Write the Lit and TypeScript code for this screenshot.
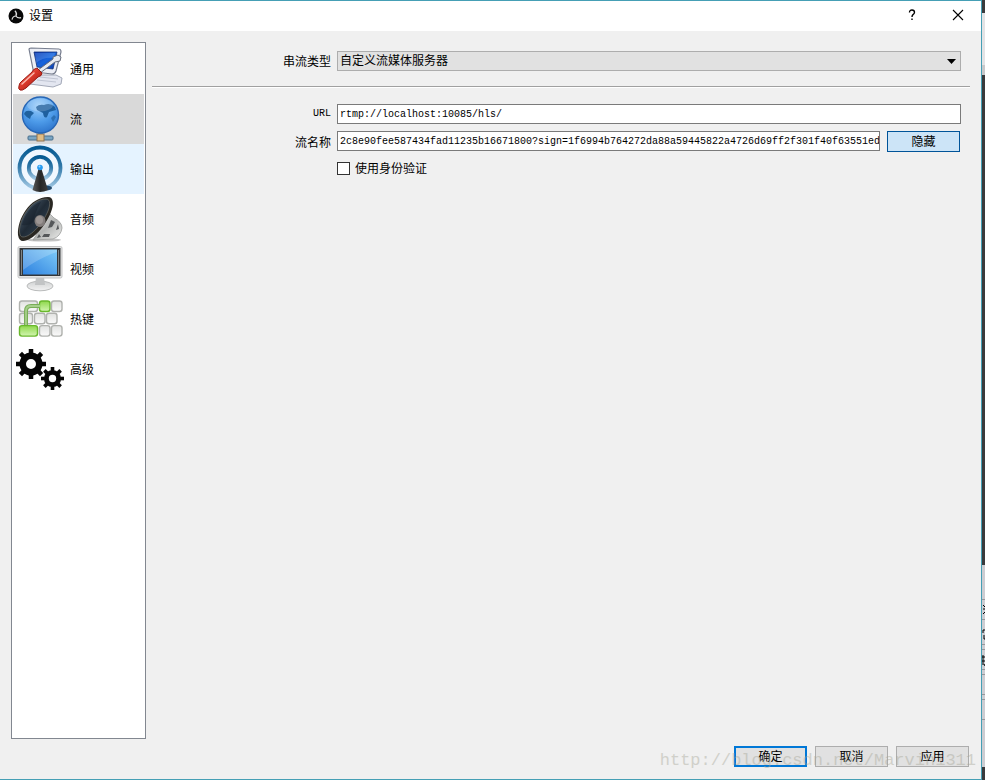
import { LitElement, html, svg, css } from "lit";
import { customElement, property, state } from "lit/decorators.js";
import { classMap } from "lit/directives/class-map.js";

const gear = (cx: number, cy: number, body: number, tip: number, hole: number, tooth: number) => svg`
  <circle cx=${cx} cy=${cy} r=${(body + hole) / 2} fill="none" stroke="#050505" stroke-width=${body - hole}></circle>
  ${[0, 45, 90, 135, 180, 225, 270, 315].map(
    (a) => svg`<rect x=${cx - tooth / 2} y=${cy - tip} width=${tooth} height=${tip - body + 1} fill="#050505" transform="rotate(${a} ${cx} ${cy})"></rect>`
  )}`;

const key = (x: number, y: number, w: number, active = false) => svg`
  <rect x=${x} y=${y} width=${w} height="10.5" rx="2.5"
    fill=${active ? "url(#keyOn)" : "url(#keyOff)"} stroke=${active ? "#69b82c" : "#b0b2ae"} stroke-width="1.4"></rect>`;

const icons: Record<string, unknown> = {
  general: svg`
    <defs>
      <linearGradient id="scr" x1="0" y1="0" x2="1" y2="1"><stop offset="0" stop-color="#0a2fa8"></stop><stop offset=".5" stop-color="#1764dc"></stop><stop offset="1" stop-color="#0b3cae"></stop></linearGradient>
      <linearGradient id="red" x1="0" y1="0" x2="1" y2="1"><stop offset="0" stop-color="#f6a093"></stop><stop offset=".45" stop-color="#dd3a2c"></stop><stop offset="1" stop-color="#8f150e"></stop></linearGradient>
    </defs>
    <path d="M23 31 L41 31 L47 34 L46 40 L38 43 L15 40 Z" fill="#e3e6f0" stroke="#a3a9b8" stroke-width="1"></path>
    <path d="M22 36 L41 38 M25 33 L43 35" stroke="#c0c5d3" stroke-width="1"></path>
    <path d="M14 5 Q14 4 16 4 L44 5 Q46 5 46 8 L41 27 Q40 30 37 30 L20 28 Q18 28 18 25 Z" fill="#eceef5" stroke="#767d8e" stroke-width="1.2"></path>
    <path d="M19 8 L42 8 L38 25 L22 23 Z" fill="url(#scr)" stroke="#143379" stroke-width=".8"></path>
    <path d="M20 9 L40 9 L39 14 Q28 13 21 19 Z" fill="#7eb2f5" opacity=".3"></path>
    <path d="M23 26 L38 15 L38 13 L43 11 L46 13 L45 17 L40 18 L25 29 Z" fill="#e7eaf0" stroke="#656c7b" stroke-width="1"></path>
    <path d="M4 42 Q4 39 7 37 L17 28 Q18 25 22 24 L27 29 Q27 32 23 33 L11 44 Q7 47 5 46 Q3 45 4 42 Z" fill="url(#red)" stroke="#991b14" stroke-width="1"></path>
    <path d="M7 40 L19 29" stroke="#fbb9ae" stroke-width="1.5" stroke-linecap="round"></path>`,
  stream: svg`
    <defs>
      <radialGradient id="sea" cx=".45" cy=".25" r=".8"><stop offset="0" stop-color="#9bcdfa"></stop><stop offset=".55" stop-color="#4d9be9"></stop><stop offset="1" stop-color="#2a70c8"></stop></radialGradient>
    </defs>
    <rect x="23" y="36" width="5" height="8" fill="#5c8fb4"></rect>
    <rect x="13" y="42" width="25" height="4" rx="1" fill="#7ba6c4" stroke="#496f8c" stroke-width="1"></rect>
    <rect x="22" y="40" width="7" height="7" fill="#e0bd86" stroke="#8f7350" stroke-width="1"></rect>
    <circle cx="25.5" cy="21" r="18" fill="url(#sea)" stroke="#2766b5" stroke-width="1.4"></circle>
    <path d="M10 18 Q12 16 16 17 L19 19 L16 22 L15 25 Q11 23 9 20 Z" fill="#1f619f"></path>
    <path d="M21 13 Q24 10 29 11 Q35 8 40 13 L41 16 L34 18 L32 23 Q29 25 28 19 L22 16 Z" fill="#1f609f"></path>
    <path d="M36 24 L39 21 L41 23 L38 28 Z" fill="#2c70b4"></path>
    <ellipse cx="25" cy="11" rx="13" ry="6.5" fill="#fff" opacity=".18"></ellipse>`,
  output: svg`
    <defs>
      <linearGradient id="wave" x1="0" y1="0" x2="0" y2="1"><stop offset="0" stop-color="#075a91"></stop><stop offset=".45" stop-color="#2f77a8"></stop><stop offset="1" stop-color="#a3c9e4"></stop></linearGradient>
      <linearGradient id="mast" x1="0" y1="0" x2="1" y2="0"><stop offset="0" stop-color="#5b5b5b"></stop><stop offset=".5" stop-color="#262626"></stop><stop offset="1" stop-color="#3c3c3c"></stop></linearGradient>
    </defs>
    <circle cx="25" cy="24" r="20.5" fill="#f1f8ff" stroke="url(#wave)" stroke-width="3.8"></circle>
    <circle cx="25" cy="24" r="11.2" fill="#edf6fe" stroke="url(#wave)" stroke-width="3.8"></circle>
    <ellipse cx="31" cy="44" rx="6" ry="2.5" fill="#23486a"></ellipse>
    <path d="M23.5 25 H26.5 L33 46 Q25 50 17.5 46 Z" fill="url(#mast)"></path>
    <circle cx="25" cy="23.5" r="2.8" fill="#259af0"></circle><circle cx="24.5" cy="22.5" r="1" fill="#9ad7ff"></circle>`,
  audio: svg`
    <defs>
      <linearGradient id="cone" x1="0" y1="0" x2="1" y2="1"><stop offset="0" stop-color="#5a6f82"></stop><stop offset=".5" stop-color="#202b36"></stop><stop offset="1" stop-color="#34485a"></stop></linearGradient>
      <linearGradient id="steel" x1="0" y1="0" x2="1" y2="1"><stop offset="0" stop-color="#f4f4f2"></stop><stop offset=".5" stop-color="#b3b5b4"></stop><stop offset="1" stop-color="#eeeeec"></stop></linearGradient>
    </defs>
    <ellipse cx="29" cy="46" rx="17" ry="1.6" fill="#c4c4c4"></ellipse>
    <path d="M35 20 L39 24 Q47 28 47 34 Q46 42 38 45 L18 46 Z" fill="url(#steel)" stroke="#9a9c9a" stroke-width=".8"></path>
    <path d="M36 26 L33 34 L37 33 L40 28 Z M29 40 L27 43 L34 43 L35 40 Z M43 30 L41 36 L44 35 Z M24 40 L22 44 L26 43 Z" fill="#55585a"></path>
    <path d="M3 41 C2 25 15 3 33 3 C39 3 39 11 36 18 C31 31 18 47 8 47 Q4 47 3 41 Z" fill="#292722"></path>
    <path d="M4.5 38 C4 25 16 5 31 5 C36 5 35 12 33 17 C28 29 16 43 8 43 Q5 43 4.5 38 Z" fill="url(#cone)" stroke="#77776f" stroke-width=".6"></path>
    <path d="M7 31 C9 22 17 10 26 8 Q20 18 18 28 Q14 32 7 31 Z" fill="#17212b" opacity=".55"></path>
    <ellipse cx="25" cy="27" rx="5.5" ry="6" fill="#827d7c"></ellipse>
    <ellipse cx="24.5" cy="26" rx="3.5" ry="4" fill="#9c9694"></ellipse>`,
  video: svg`
    <defs>
      <linearGradient id="blue" x1="1" y1="0" x2="0" y2="1"><stop offset="0" stop-color="#7dcaf8"></stop><stop offset="1" stop-color="#2d80df"></stop></linearGradient>
      <linearGradient id="foot" x1="0" y1="0" x2="0" y2="1"><stop offset="0" stop-color="#d0d2d3"></stop><stop offset="1" stop-color="#f3f3f3"></stop></linearGradient>
    </defs>
    <ellipse cx="25" cy="42" rx="13" ry="4.8" fill="url(#foot)" stroke="#b9bbbb" stroke-width="1"></ellipse>
    <path d="M21 33 H29 L30 41 H20 Z" fill="#c2c4c5"></path>
    <rect x="3" y="2.5" width="44" height="31.5" rx="1.5" fill="#e4e4e4" stroke="#c3c4c5" stroke-width="1"></rect>
    <rect x="4.5" y="4" width="41" height="28" fill="#333639"></rect>
    <path d="M6.5 6 V31 M43.5 6 V31" stroke="#7f8385" stroke-width="1"></path>
    <rect x="8" y="5.5" width="34" height="25" fill="url(#blue)"></rect>
    <path d="M8 5.5 H42 V8 Q24 14 8 26 Z" fill="#fff" opacity=".2"></path>`,
  hotkeys: svg`
    <defs>
      <linearGradient id="keyOn" x1="0" y1="0" x2="0" y2="1"><stop offset="0" stop-color="#8ed84b"></stop><stop offset="1" stop-color="#d3f5b1"></stop></linearGradient>
      <linearGradient id="keyOff" x1="0" y1="0" x2="0" y2="1"><stop offset="0" stop-color="#e1e2e0"></stop><stop offset="1" stop-color="#fafafa"></stop></linearGradient>
    </defs>
    ${key(4.5, 7, 18)}${key(24.5, 7, 10.5, true)}${key(36.5, 7, 10.5)}
    ${key(4.5, 19.3, 13)}${key(19.5, 19.3, 10.5)}${key(31.5, 19.3, 10.5)}
    ${key(24.5, 31.6, 10.5)}${key(36.5, 31.6, 10.5)}
    <path d="M11 32 V17 Q11 12 16 12 H25" fill="none" stroke="#79ad58" stroke-width="4"></path>
    <path d="M11 32 V17 Q11 12 16 12 H25" fill="none" stroke="#a6cf8b" stroke-width="1.8"></path>
    ${key(4.5, 31.6, 18, true)}`,
  advanced: svg`${gear(16, 20, 11.5, 15, 5, 4.5)}${gear(37.5, 34.5, 8.6, 11.5, 3.7, 3.6)}`,
};

@customElement("settings-icon")
export class SettingsIcon extends LitElement {
  static styles = css`
    :host { display: block; width: 50px; height: 50px; }
    svg { display: block; }
  `;
  @property() name = "general";
  render() {
    return html`<svg width="50" height="50" viewBox="0 0 50 50" aria-hidden="true">${icons[this.name]}</svg>`;
  }
}

const pages = [
  { id: "general", label: "通用" },
  { id: "stream", label: "流" },
  { id: "output", label: "输出" },
  { id: "audio", label: "音频" },
  { id: "video", label: "视频" },
  { id: "hotkeys", label: "热键" },
  { id: "advanced", label: "高级" },
];

@customElement("app-root")
export class AppRoot extends LitElement {
  static styles = css`
    :host {
      display: grid;
      grid-template-columns: minmax(0, 1fr) 3px;
      min-height: 100vh;
      color: #000;
      font: 12px/18px "Liberation Sans", "Noto Sans CJK SC", sans-serif;
    }
    * { box-sizing: border-box; }
    button, select, input { font: inherit; color: inherit; margin: 0; border-radius: 0; }
    .window {
      position: relative;
      display: flex;
      flex-direction: column;
      background: #f0f0f0;
      border: 1px solid #459fb5;
      border-left: 0;
    }
    .titlebar { display: flex; align-items: center; height: 30px; padding: 0 8px; background: #fff; }
    .title { flex: 1; margin: 0 0 0 5px; font-size: 12px; font-weight: 400; }
    .logo { display: block; }
    .caption { display: grid; place-items: center; width: 30px; height: 30px; padding: 0 0 2px; border: 0; background: none; }
    .captions { display: flex; gap: 16px; }
    .body { flex: 1; display: flex; gap: 6px; padding: 11px 11px 7px; }
    .nav { flex: none; width: 135px; padding: 1px; border: 1px solid #828790; background: #fff; }
    .item {
      display: flex; align-items: center; gap: 5px;
      width: 100%; height: 50px; padding: 0 0 0 2px;
      border: 0; background: none; text-align: left;
    }
    .name { padding-top: 2px; }
    .item.selected { background: #d9d9d9; }
    .item.hover { background: #e5f3ff; }
    .page { flex: 1; min-width: 0; padding-top: 9px; }
    .row {
      display: grid;
      grid-template-columns: 179px minmax(0, 1fr);
      align-items: center;
      column-gap: 6px;
      padding-right: 9px;
    }
    .label { padding-top: 2px; text-align: right; }
    .latin { padding-top: 0; font: 10px/18px "Liberation Mono", monospace; }
    .combo { display: grid; align-items: center; }
    .combo > * { grid-area: 1 / 1; }
    .arrow { justify-self: end; margin-right: 5px; pointer-events: none; }
    .select { appearance: none; width: 100%; height: 20px; padding: 1px 2px 0; border: 1px solid #adadad; background: #e1e1e1; line-height: 17px; }
    .rule { height: 2px; margin: 15px 0 16px; border: 0; border-top: 1px solid #a0a0a0; background: #fff; }
    .text {
      width: 100%; min-width: 0; height: 20px; padding: 0 0 0 2px;
      border: 1px solid #7a7a7a; background: #fff; outline: 0;
      font: 10px/18px "Liberation Mono", monospace;
    }
    .key { margin-top: 7px; }
    .pair { display: flex; gap: 7px; margin-right: 1px; }
    .button { flex: none; width: 73px; height: 21px; padding: 1px 0 0; border: 1px solid #adadad; background: #e1e1e1; line-height: 18px; }
    .button.active { border-color: #005499; background: #cce4f7; }
    .button.primary { border: 2px solid #0078d7; line-height: 16px; }
    .auth { margin-top: 6px; }
    .check { grid-column: 2; display: flex; align-items: center; gap: 5px; }
    .box { appearance: none; width: 13px; height: 13px; border: 1px solid #333; background: #fff; }
    .box:checked { background: #333; box-shadow: inset 0 0 0 2px #fff; }
    .footer { display: flex; justify-content: flex-end; gap: 8px; padding: 0 12px 12px; }
    .mark {
      position: absolute; right: 5px; bottom: 6px;
      font: 17px/24px "Liberation Mono", monospace;
      color: #a5a596; opacity: .42; pointer-events: none;
    }
    .edge { display: flex; flex-direction: column; overflow: hidden; background: #3a3a3c; }
    .e1 { flex: 13; }
    .e2 { flex: 52; background: #e3e3e5; }
    .e3 { flex: 10; background: #c8c8ca; }
    .e4 { flex: 490; }
    .e5 { flex: 202; background: #cdcdd2; }
    .e6 { flex: 13; }
    .fill { display: block; width: 3px; height: 100%; }
  `;

  @state() private page = "stream";
  @state() private url = "rtmp://localhost:10085/hls/";
  @state() private key = "2c8e90fee587434fad11235b16671800?sign=1f6994b764272da88a59445822a4726d69ff2f301f40f63551ed";
  @state() private keyShown = true;

  render() {
    return html`
      <main class="window">
        <header class="titlebar">
          <svg class="logo" width="16" height="16" viewBox="0 0 16 16" aria-hidden="true">
            <circle cx="8" cy="8" r="7.5" fill="#080808"></circle>
            ${[10, 130, 250].map(
              (a) => svg`<path transform="rotate(${a} 8 8)" d="M8 8 Q9 5 6 3" fill="none" stroke="#dedede" stroke-width="1.2"></path>`
            )}
          </svg>
          <h1 class="title">设置</h1>
          <div class="captions">
            <button class="caption" aria-label="帮助">
              <svg width="8" height="12" viewBox="0 0 8 12"><path d="M1.5 3.5 Q1.5 1 4 1 Q6.5 1 6.5 3.3 Q6.5 4.6 5 5.6 Q4 6.4 4 8 M4 9.5 V11" fill="none" stroke="#000" stroke-width="1.4"></path></svg>
            </button>
            <button class="caption" aria-label="关闭">
              <svg width="12" height="12" viewBox="0 0 12 12"><path d="M1 1 L11 11 M11 1 L1 11" stroke="#000" stroke-width="1.1"></path></svg>
            </button>
          </div>
        </header>
        <div class="body">
          <nav class="nav">
            ${pages.map(
              (p) => html`<button
                class=${classMap({ item: true, selected: p.id === this.page, hover: p.id === "output" && p.id !== this.page })}
                @click=${() => (this.page = p.id)}
              ><settings-icon name=${p.id}></settings-icon><span class="name">${p.label}</span></button>`
            )}
          </nav>
          <section class="page">
            <div class="row">
              <label class="label" for="type">串流类型</label>
              <div class="combo">
                <select class="select" id="type"><option>自定义流媒体服务器</option></select>
                <svg class="arrow" width="9" height="5" viewBox="0 0 9 5" aria-hidden="true"><path d="M0 0 H9 L4.5 5 Z"></path></svg>
              </div>
            </div>
            <hr class="rule" />
            <div class="row">
              <label class="label latin" for="url">URL</label>
              <input class="text" id="url" .value=${this.url} />
            </div>
            <div class="row key">
              <label class="label" for="key">流名称</label>
              <div class="pair">
                <input class="text" id="key" type=${this.keyShown ? "text" : "password"} .value=${this.key} />
                <button class="button active" @click=${() => (this.keyShown = !this.keyShown)}>${this.keyShown ? "隐藏" : "显示"}</button>
              </div>
            </div>
            <div class="row auth">
              <label class="check"><input class="box" type="checkbox" /><span class="name">使用身份验证</span></label>
            </div>
          </section>
        </div>
        <footer class="footer">
          <button class="button primary">确定</button>
          <button class="button">取消</button>
          <button class="button">应用</button>
        </footer>
        <div class="mark">http://blog.csdn.net/Marvin1311</div>
      </main>
      <aside class="edge" aria-hidden="true">
        <div class="e1"></div><div class="e2"></div><div class="e3"></div><div class="e4"></div>
        <div class="e5">
          <svg class="fill" viewBox="0 0 3 202" preserveAspectRatio="none">
            <path d="M0 34.5 H3 M0 54.5 H3 M0 79.5 H3 M0 84.5 H3 M0 104.5 H3 M0 109.5 H3 M0 129.5 H3 M0 134.5 H3 M0 154.5 H3" stroke="#98989c"></path>
            <path d="M1 40 L3 42 M1 44 H3 M1 49 L3 47 M1 65 H3 M1 65 V68 M2 70 V74 H3 M1 90 V100 M0 92 H3 M0 96 H3 M2 99 L3 101" stroke="#000" fill="none"></path>
          </svg>
        </div>
        <div class="e6"></div>
      </aside>`;
  }
}
